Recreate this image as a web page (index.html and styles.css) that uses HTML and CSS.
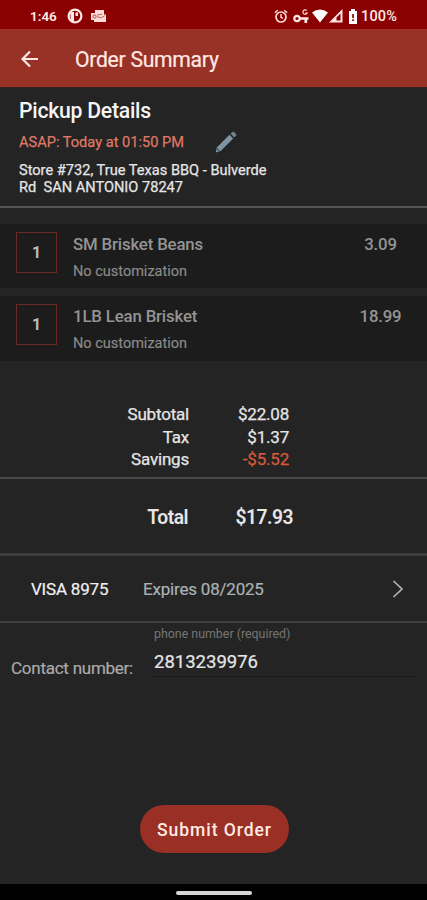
FILE: index.html
```html
<!DOCTYPE html>
<html lang="en">
<head>
<meta charset="utf-8">
<title>Order Summary</title>
<link rel="stylesheet" href="styles.css">
</head>
<body>
<div class="status">
  <span class="clock">1:46</span>
  <svg class="s-app" width="16" height="16" viewBox="0 0 16 16"><circle cx="8" cy="8" r="6.400" fill="none" stroke="#ffe9e6" stroke-width="2.200"/><path d="M3 4h4v9H4zM8.500 4.500h2.500v3.500H8.500z" fill="#ffe9e6"/></svg>
  <svg class="s-mail" width="17" height="14" viewBox="0 0 17 14"><path d="M5 1h9v4l2 1v7H4v-2H1V4h4z" fill="#ffdcd8"/><circle cx="4.500" cy="7.500" r="1.600" fill="none" stroke="#a8403c"/><path d="M8 5v4M9 5.500h3M9 8l2 1 4-2.500" fill="none" stroke="#a8403c" stroke-width=".8"/></svg>
  <span class="grow"></span>
  <svg class="s-alarm" width="14" height="15" viewBox="0 0 14 15"><circle cx="7" cy="8" r="5" fill="none" stroke="#ffdcd8" stroke-width="1.700"/><path d="M.8 3.800 3.800 1.200M10.200 1.200l3 2.600M7 5v3.300l2 1" fill="none" stroke="#ffdcd8" stroke-width="1.400"/></svg>
  <svg class="s-key" width="16" height="16" viewBox="0 0 16 16"><circle cx="4" cy="10.500" r="2.700" fill="none" stroke="#ffe9e6" stroke-width="2.200"/><path d="M6.500 10.500H15.500M12.800 10.500v4.500" fill="none" stroke="#ffe9e6" stroke-width="2.700"/><path d="M13.700 2.500a2.200 2.200 0 1 0 .4 2.500h-1.800" fill="none" stroke="#ffdcd8" stroke-width="1.200"/></svg>
  <svg class="s-wifi" width="16" height="14" viewBox="0 0 16 14"><path d="M0 3.500Q8-2.500 16 3.500L8 13.500z" fill="#fff"/></svg>
  <svg class="s-cell" width="14" height="14" viewBox="0 0 14 14"><path d="M0 13.500 13.500 0v13.500z" fill="#ffe3df"/><path d="M7.500 8.500 11.500 4.500v7H7.500z" fill="#8b0000"/></svg>
  <svg class="s-bat" width="10" height="15" viewBox="0 0 10 15"><path d="M3 0h4v2h2v13H1V2h2z" fill="#fff"/><path d="M4.200 5h1.700v4H4.200zM4.200 10.300h1.700V12H4.200z" fill="#8b0000"/></svg>
  <span class="pct">100%</span>
</div>
<header class="bar">
  <svg class="back" width="18" height="18" viewBox="0 0 18 18"><path d="M17 9H2M9 1.500 1.500 9 9 16.500" fill="none" stroke="#ffe9e4" stroke-width="2.200"/></svg>
  <h1>Order Summary</h1>
</header>
<main>
  <section class="pickup">
    <h2>Pickup Details</h2>
    <div class="when"><span>ASAP: Today at 01:50 PM</span>
      <svg width="22" height="22" viewBox="0 0 22 22"><path d="M.6 21.400 2 16.200 14.400 3.800l3.800 3.800L5.800 20z" fill="#7c94a3"/><path d="M15.500 2.800 17.300 1q.8-.7 1.600 0L21 3.100q.7.800 0 1.600l-1.800 1.800z" fill="#70828e"/><path d="M1.700 17.300 4.700 20.300" stroke="#242424" stroke-width="1"/></svg>
    </div>
    <p>Store #732, True Texas BBQ - Bulverde<br>Rd&nbsp; SAN ANTONIO 78247</p>
  </section>
  <section class="items">
    <div class="item"><div class="qty">1</div><div class="desc"><div class="name">SM Brisket Beans</div><div class="note">No customization</div></div><div class="price">3.09</div></div>
    <div class="item"><div class="qty">1</div><div class="desc"><div class="name">1LB Lean Brisket</div><div class="note">No customization</div></div><div class="price">18.99</div></div>
  </section>
  <section class="sums">
    <div class="row"><span>Subtotal</span><span>$22.08</span></div>
    <div class="row"><span>Tax</span><span>$1.37</span></div>
    <div class="row"><span>Savings</span><span class="save">-$5.52</span></div>
  </section>
  <section class="total"><span>Total</span><span>$17.93</span></section>
  <section class="card"><span class="visa">VISA 8975</span><span class="exp">Expires 08/2025</span>
    <svg width="12" height="18" viewBox="0 0 12 18"><path d="M1.500 1 10 9l-8.500 8" fill="none" stroke="#b4b4b4" stroke-width="1.700"/></svg>
  </section>
  <section class="contact"><label>Contact number:</label>
    <div class="field"><span class="hint">phone number (required)</span><span class="phone">2813239976</span></div>
  </section>
  <button class="submit">Submit Order</button>
</main>
<footer><span class="pill"></span></footer>
</body>
</html>
```
FILE: styles.css
```css
* { box-sizing: border-box; }
body { margin: 0; width: 427px; height: 900px; overflow: hidden; background: #242424; color: #e6e6e6; font-family: Roboto, sans-serif; display: flex; flex-direction: column; white-space: nowrap; }
h1, h2, p { margin: 0; }
svg { flex: none; display: block; }
.status { height: 29px; flex: none; background: #8b0000; display: flex; align-items: center; padding: 3px 29px 0 30px; color: #ffe9e6; font-size: 13.500px; font-weight: 500; }
.clock { width: 37px; font-weight: 600; }
.s-mail { margin-left: 7px; }
.grow { flex: 1; }
.s-key { margin-left: 5px; }
.s-wifi { margin-left: 3px; }
.s-cell { margin-left: 1px; }
.s-bat { margin-left: 5px; }
.pct { margin-left: 3px; width: 37px; font-size: 14.500px; letter-spacing: .15px; }
.bar { height: 59px; flex: none; background: #983126; border-bottom: 1px solid #3a201d; display: flex; align-items: center; padding: 1px 0 0 21px; }
h1 { margin: 2px 0 0 36px; color: #ffe9e4; font-size: 21.2px; line-height: 26px; font-weight: 400; letter-spacing: -.3px; -webkit-text-stroke: .2px; }
main { flex: 1; display: flex; flex-direction: column; }
.pickup { height: 120px; padding: 10px 0 0 19px; border-bottom: 2px solid #545656; }
h2 { font-size: 21.2px; line-height: 26px; font-weight: 500; letter-spacing: -.25px; color: #f5f5f5; }
.when { display: flex; align-items: center; height: 36px; color: #df7964; font-size: 14.6px; -webkit-text-stroke: .25px; }
.when span { width: 165px; }
.when svg { margin-left: 31px; }
.pickup p { font-size: 14.6px; line-height: 17px; margin-top: 2px; -webkit-text-stroke: .25px; }
.items { padding-top: 16px; display: grid; gap: 8px; }
.item { height: 64px; background: #1c1c1c; display: flex; padding: 8px 0 0 16px; color: #949494; }
.item:last-child { height: 65px; }
.qty { width: 41px; height: 41px; border: 1px solid #6d2923; display: grid; place-items: center; font-size: 16px; font-weight: 700; color: #bcbcbc; }
.desc { margin-left: 16px; width: 275px; }
.name { font-size: 16.8px; line-height: 24px; font-weight: 500; letter-spacing: -.15px; }
.note { font-size: 14.5px; line-height: 20px; margin-top: 6px; color: #8b8b8b; -webkit-text-stroke: .15px; }
.price { width: 65px; text-align: center; font-size: 16.8px; line-height: 24px; font-weight: 500; letter-spacing: -.2px; }
.sums { height: 118px; padding-top: 42px; border-bottom: 2px solid #484b4a; font-size: 17px; letter-spacing: -.2px; -webkit-text-stroke: .25px; }
.row { height: 22.500px; line-height: 22.500px; display: grid; grid-template-columns: 189px 100px; text-align: right; }
.save { color: #d65a3a; }
.total { height: 77px; border-bottom: 3px solid #3b3e3e; display: grid; grid-template-columns: 188px 105px; align-items: center; text-align: right; font-size: 19.300px; font-weight: 600; letter-spacing: -.5px; padding-top: 2px; }
.card { height: 67px; border-bottom: 2px solid #3e4040; display: flex; align-items: center; padding-left: 31px; font-size: 17px; letter-spacing: -.2px; -webkit-text-stroke: .2px; }
.visa { width: 112px; color: #f0f0f0; }
.exp { width: 249px; color: #aab2b5; }
.contact { height: 54px; display: flex; padding-left: 11px; }
.contact label { width: 143px; padding-top: 34px; font-size: 17px; line-height: 22px; letter-spacing: -.25px; color: #aaa; -webkit-text-stroke: .2px; }
.field { width: 261px; border-bottom: 1px solid #191919; }
.field span { display: block; }
.hint { font-size: 12.4px; line-height: 14px; padding-top: 4px; color: #757575; }
.phone { font-size: 18.5px; line-height: 22px; margin-top: 10px; -webkit-text-stroke: .2px; }
.submit { margin: 128px 0 0 140px; width: 149px; height: 48px; border: 0; border-radius: 24px; background: #9a3025; color: #ffe9e4; font: 500 17.5px/48px Roboto, sans-serif; letter-spacing: .95px; padding: 1px 0 0; }
footer { height: 16px; flex: none; background: #000; display: flex; justify-content: center; padding-top: 7px; }
.pill { width: 76px; height: 4px; border-radius: 2px; background: #d5d7d7; }
```
